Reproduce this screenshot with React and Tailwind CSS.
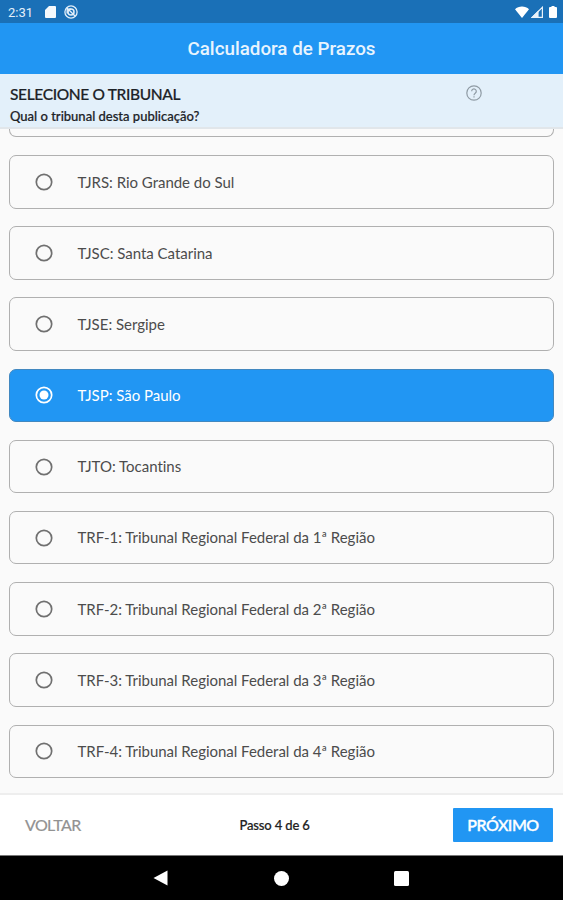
import { useState } from 'react';

const courts = [
  { id: 'tjrs', label: 'TJRS: Rio Grande do Sul' },
  { id: 'tjsc', label: 'TJSC: Santa Catarina' },
  { id: 'tjse', label: 'TJSE: Sergipe' },
  { id: 'tjsp', label: 'TJSP: São Paulo' },
  { id: 'tjto', label: 'TJTO: Tocantins' },
  { id: 'trf1', label: 'TRF-1: Tribunal Regional Federal da 1ª Região' },
  { id: 'trf2', label: 'TRF-2: Tribunal Regional Federal da 2ª Região' },
  { id: 'trf3', label: 'TRF-3: Tribunal Regional Federal da 3ª Região' },
  { id: 'trf4', label: 'TRF-4: Tribunal Regional Federal da 4ª Região' },
];

function StatusBar() {
  return (
    <div className="flex h-[23px] shrink-0 items-center bg-[#1a70b7] pl-2 pr-[6px] pt-px font-['Roboto',sans-serif] text-[#e3effa]">
      <span className="w-[37px] text-[13px] leading-none">2:31</span>
      {/* SD card */}
      <svg className="h-3 w-[11px]" viewBox="0 0 11 12" fill="#f4f9fd">
        <path d="M4 0h6a1 1 0 0 1 1 1v10a1 1 0 0 1-1 1H1a1 1 0 0 1-1-1V4z" />
      </svg>
      {/* Sync notification */}
      <svg className="ml-2 h-[14px] w-[14px]" viewBox="0 0 14 14" fill="none" stroke="currentColor">
        <circle cx="7" cy="7" r="6.1" strokeWidth="1.3" />
        <circle cx="7" cy="7" r="3" strokeWidth="1.5" />
        <path d="M3 3l8 8M3.2 8.5V4.3h4" strokeWidth="1.4" />
      </svg>
      <div className="ml-auto flex items-center">
        <svg className="h-3 w-[14px]" viewBox="0 0 14 12" fill="#fff">
          <path d="M7 12L0 3.2C1.8 1.5 4.2.5 7 .5s5.2 1 7 2.7z" />
        </svg>
        <svg className="ml-[2px] h-3 w-3" viewBox="0 0 12 12" fill="none" stroke="#e8f2fb" strokeWidth="1.2">
          <path d="M11.4 1.3v10.1H1.3z" />
          <path d="M7 5.7v5.7H1.3z" fill="#e8f2fb" />
        </svg>
        <svg className="ml-[6px] h-3 w-2" viewBox="0 0 8 12" fill="#fff">
          <path d="M2.5 0h3v1H7a1 1 0 0 1 1 1v9a1 1 0 0 1-1 1H1a1 1 0 0 1-1-1V2a1 1 0 0 1 1-1h1.5z" />
        </svg>
      </div>
    </div>
  );
}

function CourtOption({ label, selected, onSelect }) {
  return (
    <button
      onClick={onSelect}
      className={`flex h-[53.5px] w-full shrink-0 items-center rounded-[7px] border pl-[24.5px] text-left text-[15px] tracking-[-0.02px] ${
        selected
          ? 'border-[#4288c0] bg-[#2196f3] text-white'
          : 'border-[#b0b0b0] bg-[#fafafa] text-[#4c4c4c]'
      }`}
    >
      <svg className="h-[18px] w-[18px] shrink-0" viewBox="0 0 18 18" fill="none" stroke={selected ? '#fff' : '#707070'}>
        <circle cx="9" cy="9" r="7.7" strokeWidth="1.7" />
        {selected && <circle cx="9" cy="9" r="4.5" fill="#fff" stroke="none" />}
      </svg>
      <span className="ml-[25px] whitespace-nowrap">{label}</span>
    </button>
  );
}

function NavigationBar() {
  return (
    <div className="flex h-[45px] shrink-0 items-center border-t border-[#777] bg-black pl-[153px]">
      <svg className="h-4 w-[15px]" viewBox="0 0 15 16" fill="#fff">
        <path d="M14.5.5v15L.5 8z" />
      </svg>
      <div className="ml-[106px] h-[15px] w-[15px] rounded-full bg-white" />
      <div className="ml-[105px] h-[15px] w-[15px] rounded-[1.5px] bg-white" />
    </div>
  );
}

export default function App() {
  const [selected, setSelected] = useState('tjsp');

  return (
    <div className="flex h-[900px] w-[563px] flex-col overflow-hidden bg-[#fafafa] font-['Lato',sans-serif]">
      <StatusBar />

      <header className="flex h-[51px] shrink-0 items-center justify-center bg-[#2196f3] pt-[2px]">
        <h1 className="font-['Roboto',sans-serif] text-[18.8px] font-medium text-[#e8f4fe]">Calculadora de Prazos</h1>
      </header>

      <section className="flex h-[55px] shrink-0 justify-between border-b-2 border-[#e1e6ea] bg-[#e3f0fa] pl-[10px] pr-[81px] text-[#1c2227]">
        <div className="pt-[10px] [-webkit-text-stroke:0.2px_currentColor]">
          <h2 className="text-[15.5px] font-medium leading-5 tracking-[-0.35px]">SELECIONE O TRIBUNAL</h2>
          <p className="mt-[3px] text-[13px] font-medium leading-[18px]">Qual o tribunal desta publicação?</p>
        </div>
        <svg className="mt-[11px] h-4 w-4" viewBox="0 0 16 16" fill="none" stroke="#8f9ba4" strokeWidth="1.2">
          <circle cx="8" cy="8" r="7.2" />
          <path d="M5.7 6.3a2.3 2.3 0 1 1 3.7 1.8C8.5 8.8 8 9.1 8 10.2" />
          <path d="M8 11.3v1.3" />
        </svg>
      </section>

      <main className="flex min-h-0 flex-1 flex-col overflow-hidden pl-[9px] pr-[9.5px]">
        {/* Bottom edge of the card scrolled under the header */}
        <div className="h-2 shrink-0 rounded-b-[7px] border border-t-0 border-[#b0b0b0]" />
        <div className="mt-[18px] flex flex-col gap-[17.7px]">
          {courts.map((court) => (
            <CourtOption
              key={court.id}
              label={court.label}
              selected={court.id === selected}
              onSelect={() => setSelected(court.id)}
            />
          ))}
        </div>
      </main>

      <footer className="flex h-[62px] shrink-0 items-center border-t-2 border-[#eee] bg-white pl-[25px] pr-[10px]">
        <button className="w-[214.5px] text-left text-[16px] tracking-[-0.6px] text-[#929292] [-webkit-text-stroke:0.2px_currentColor]">VOLTAR</button>
        <span className="pt-px text-[13px] font-medium tracking-[-0.15px] text-[#222] [-webkit-text-stroke:0.2px_currentColor]">Passo 4 de 6</span>
        <button className="ml-auto h-[34px] w-[100px] rounded-[1px] bg-[#2196f3] text-[16px] font-medium tracking-[-0.5px] text-white [-webkit-text-stroke:0.4px_currentColor]">PRÓXIMO</button>
      </footer>

      <NavigationBar />
    </div>
  );
}
